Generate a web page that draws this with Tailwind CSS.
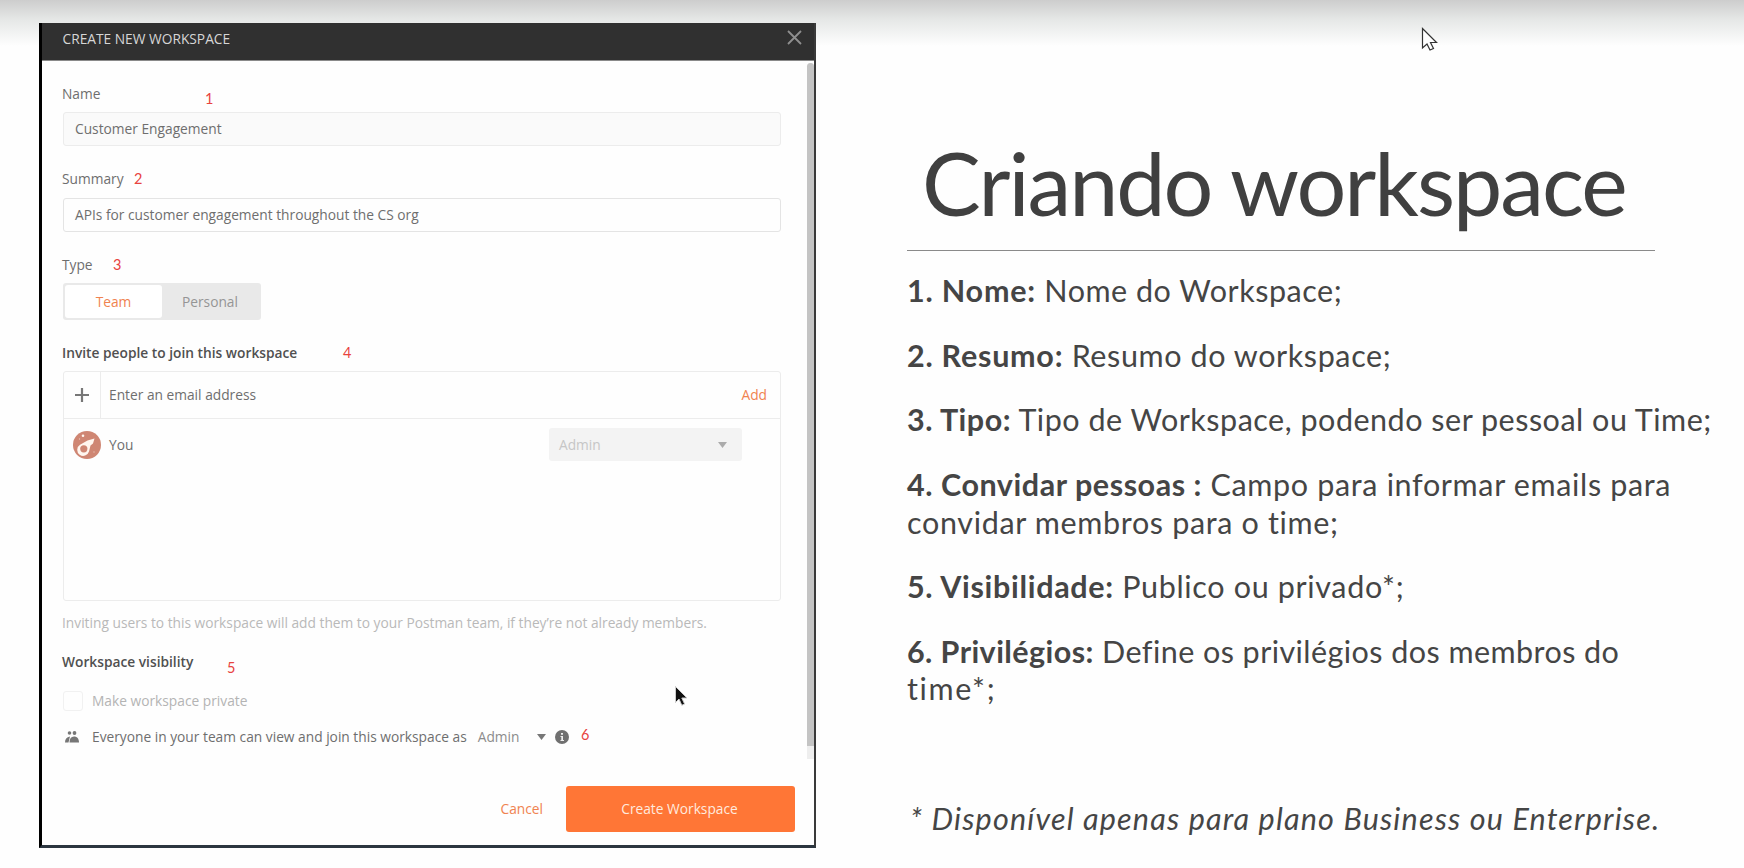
<!DOCTYPE html>
<html lang="pt">
<head>
<meta charset="utf-8">
<title>Criando workspace</title>
<script src="https://cdn.jsdelivr.net/npm/@tailwindcss/browser@4"></script>
</head>
<body class="bg-[#fefefe]">
<main class="relative flex h-[868px] w-[1744px] overflow-hidden bg-linear-to-b from-[#cdcdcd] from-0% via-[#e6e8e7] via-[20px] to-[#fefefe] to-[46px] pl-[38.5px] pt-[23px]">

  <section class="relative flex h-[825px] w-[777.5px] shrink-0 flex-col border-r-2 border-b-[3px] border-l-[3px] border-r-[#3a3a3a] border-b-[#2c3640] border-l-black bg-[#fefefe] font-['Open_Sans',sans-serif] text-[13.75px] leading-[20px] text-[#6e6e6e]">
    <header class="flex h-[38px] shrink-0 items-start justify-between border-b border-[#8a8a8a] bg-[#303030] pl-[21px] pr-[12px] pt-[6px] text-[#d6d6d6]">
      <span>CREATE NEW WORKSPACE</span>
      <svg class="mt-[1px] size-[15px]" viewBox="0 0 15 15" fill="none" stroke="#8f8f8f" stroke-width="1.8"><path d="M1 1L14 14M14 1L1 14"/></svg>
    </header>

    <div class="flex flex-col pl-[21.5px] pr-[33px] pt-[23px]">
      <div class="-ml-px">Name</div>
      <div class="mt-[8px] flex h-[34px] items-center rounded-[3px] border border-[#ececec] bg-[#fafafa] pl-[11px]">Customer Engagement</div>
      <div class="-ml-px mt-[23px]">Summary</div>
      <div class="mt-[9px] flex h-[34px] items-center rounded-[3px] border border-[#e4e4e4] pl-[11px]">APIs for customer engagement throughout the CS org</div>
      <div class="-ml-px mt-[23px]">Type</div>
      <div class="mt-2 flex h-[37px] w-[198px] rounded-[3px] bg-[#e9e9e9] p-[2px] text-center leading-[33px]">
        <div class="w-[97px] rounded-[3px] bg-white text-[#f08350]">Team</div>
        <div class="flex-1 pr-px text-[#959595]">Personal</div>
      </div>
      <div class="-ml-px mt-[23px] font-semibold text-[#505050]">Invite people to join this workspace</div>
      <div class="mt-[8px] flex h-[230px] flex-col rounded-[3px] border border-[#ececec]">
        <div class="flex h-[47px] items-center border-b border-[#ececec]">
          <div class="flex h-full w-[37px] items-center justify-center border-r border-[#ececec]">
            <svg class="size-[14px]" viewBox="0 0 14 14" stroke="#777" stroke-width="2.2"><path d="M7 0V14M0 7H14"/></svg>
          </div>
          <span class="ml-2">Enter an email address</span>
          <span class="ml-auto mr-[13px] text-[#f08350]">Add</span>
        </div>
        <div class="flex items-center pl-[9px] pr-[38px] pt-[9px]">
          <svg class="size-[28px]" viewBox="0 0 28 28"><circle cx="14" cy="14" r="14" fill="#cf8673"/><path d="M21.500 7.500L20 12.500L17.500 14.500L16 20.500A6 6 0 1 1 7 13.800L14.500 9.500Z" fill="#fff6ef"/><circle cx="10.800" cy="17.800" r="3.600" fill="#cf8673"/><circle cx="10" cy="4.800" r="1.300" fill="#fff6ef"/><circle cx="6.500" cy="8" r=".7" fill="#e9c1b4"/><circle cx="21" cy="21" r=".7" fill="#e9c1b4"/></svg>
          <span class="ml-[8px]">You</span>
          <div class="ml-auto flex h-[33px] w-[193px] items-center justify-between rounded-[3px] bg-[#f3f3f3] pl-[10px] pr-[15px] text-[#c6c6c6]"><span>Admin</span><svg class="h-[6px] w-[9px]" viewBox="0 0 9 6"><path d="M0 0H9L4.500 6Z" fill="#ababab"/></svg></div>
        </div>
      </div>
      <div class="-ml-px mt-3 whitespace-nowrap text-[#b9b9b9]">Inviting users to this workspace will add them to your Postman team, if they’re not already members.</div>
      <div class="-ml-px mt-[19px] font-semibold text-[#505050]">Workspace visibility</div>
      <div class="mt-[19px] flex h-5 items-center text-[#b4b4b4]"><span class="size-5 rounded-[3px] border border-[#f1f1f1]"></span><span class="ml-[9px]">Make workspace private</span></div>
      <div class="mt-[16px] flex h-5 items-center whitespace-nowrap">
        <svg class="ml-[2px] h-[12px] w-[14px]" viewBox="0 0 14 12" fill="#777"><circle cx="4.500" cy="2" r="1.800"/><circle cx="9.500" cy="2" r="1.900"/><path d="M0 11.500C0 8 1.500 6 5 5.500L3.500 11.500ZM4.500 11.500C4.500 7.500 6 5.500 9 5.500S14 7.500 14 11.500Z"/></svg>
        <span class="ml-[13px]">Everyone in your team can view and join this workspace as</span>
        <span class="ml-[11px] text-[#8c8c8c]">Admin</span>
        <svg class="ml-[18px] h-[6px] w-[9px]" viewBox="0 0 9 6"><path d="M0 0H9L4.500 6Z" fill="#777"/></svg>
        <svg class="ml-[9px] size-[14px]" viewBox="0 0 14 14"><circle cx="7" cy="7" r="7" fill="#707070"/><path d="M6 3H8V4.800H6ZM5.500 6H8V10H9V11H5.500V10H6.300V7H5.500Z" fill="#eee"/></svg>
      </div>
    </div>

    <footer class="mt-[39px] flex items-center justify-end pr-[19px]">
      <span class="mr-[23px] text-[#f08350]">Cancel</span>
      <div class="flex h-[46px] w-[229px] items-center justify-center rounded-[3px] bg-[#ff7636] pr-[2px] text-[#ffeadf]">Create Workspace</div>
    </footer>

    <div class="absolute right-0 top-[40px] h-[696px] w-[7px] rounded-t-full bg-[#eee]"><div class="h-[683px] rounded-t-full bg-[#c4c4c4]"></div></div>

    <!-- numbered callouts over the form -->
    <div class="font-[Lato,sans-serif] text-[14.5px] leading-[18px] text-[#e8433f]">
      <span class="absolute left-[163.5px] top-[67px]">1</span>
      <span class="absolute left-[92.5px] top-[147px]">2</span>
      <span class="absolute left-[71.5px] top-[233px]">3</span>
      <span class="absolute left-[301.5px] top-[321px]">4</span>
      <span class="absolute left-[185.5px] top-[636px]">5</span>
      <span class="absolute left-[539.5px] top-[703px]">6</span>
    </div>
    <svg class="absolute left-[632px] top-[662px] h-[23px] w-[16px]" viewBox="0 0 16 23"><path d="M1.500 1.500V17.500L5 14L7.800 20.300L10.600 19L7.800 13H13Z" fill="#111" stroke="#ccc"/></svg>
  </section>

  <section class="flex flex-col pl-[91px] pt-[107px] font-[Lato,sans-serif] text-[30.5px] leading-[37.4px] text-[#454545] [font-variant-ligatures:none]">
    <h1 class="w-[748px] whitespace-nowrap border-b border-[#8a8a8a] pb-[16px] pl-[15px] text-[88px] leading-[104px] tracking-[-2.05px] text-[#404040]">Criando workspace</h1>
    <div class="flex flex-col gap-[27.3px] whitespace-nowrap pt-[21px]">
      <p class="tracking-[0.52px]"><b class="tracking-[0.8px]">1. Nome:</b> Nome do Workspace;</p>
      <p class="tracking-[0.6px]"><b class="tracking-[0.75px]">2. Resumo:</b> Resumo do workspace;</p>
      <p class="tracking-[0.51px]"><b class="tracking-[0.5px]">3. Tipo:</b> Tipo de Workspace, podendo ser pessoal ou Time;</p>
      <p class="tracking-[0.66px]"><b class="tracking-[0.55px]">4. Convidar pessoas :</b> Campo para informar emails para<br>convidar membros para o time;</p>
      <p class="tracking-[0.66px]"><b class="tracking-[0.68px]">5. Visibilidade:</b> Publico ou privado*;</p>
      <p class="tracking-[0.44px]"><b class="tracking-[0.42px]">6. Privilégios:</b> Define os privilégios dos membros do<br><span class="tracking-[1.6px]">time*;</span></p>
    </div>
    <p class="mt-[92px] whitespace-nowrap pl-[3px] italic tracking-[1.18px]">* Disponível apenas para plano Business ou Enterprise.</p>
  </section>

  <svg class="absolute left-[1421px] top-[27px] h-[25px] w-[18px]" viewBox="0 0 18 25"><path d="M1.500 1.500V21L6 17L9 23L12.500 21.500L9.500 15.500H15.500Z" fill="#fff" stroke="#333" stroke-width="1.200"/></svg>
</main>
</body>
</html>
